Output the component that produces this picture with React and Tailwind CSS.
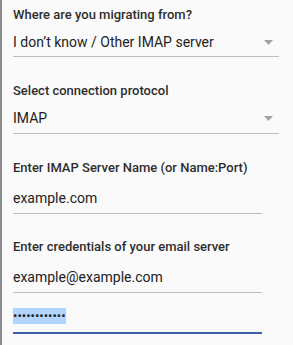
import React from "react";

function Arrow() {
  return (
    <svg width="9" height="5" viewBox="0 0 9 5" className="mr-[6px]">
      <path d="M0 0 L9 0 L4.5 5 Z" fill="#a3a3a3" />
    </svg>
  );
}

function Label({ children, className = "" }) {
  return (
    <div className={`h-[16px] text-[13px] leading-[16px] font-medium text-[#2e2e2e] ${className}`}>
      {children}
    </div>
  );
}

export default function App() {
  return (
    <div
      className="w-[293px] h-[345px] overflow-hidden bg-[#fafafa] border-l-2 border-[#8c8c8c] text-[#222]"
      style={{ fontFamily: "Roboto, 'Noto Sans', sans-serif" }}
    >
      <div className="pl-[11px] pt-[7px]">
        {/* Source */}
        <Label>Where are you migrating from?</Label>
        <div className="mt-[9px] w-[266px] h-[25px] border-b border-[#bdbdbd] flex items-start justify-between">
          <span className="text-[14px] leading-[20px]">I don’t know / Other IMAP server</span>
          <div className="h-[20px] flex items-center"><Arrow /></div>
        </div>

        {/* Protocol */}
        <Label className="mt-[26px]">Select connection protocol</Label>
        <div className="mt-[9px] w-[266px] h-[26px] border-b border-[#bdbdbd] flex items-start justify-between">
          <span className="text-[14px] leading-[20px]">IMAP</span>
          <div className="h-[20px] flex items-center"><Arrow /></div>
        </div>

        {/* Server */}
        <Label className="mt-[26px]">Enter IMAP Server Name (or Name:Port)</Label>
        <div className="mt-[10px] w-[249px] h-[28px] border-b border-[#bdbdbd]">
          <span className="text-[14px] leading-[20px]">example.com</span>
        </div>

        {/* Credentials */}
        <Label className="mt-[25px]">Enter credentials of your email server</Label>
        <div className="mt-[10px] w-[249px] h-[28px] border-b border-[#bdbdbd]">
          <span className="text-[14px] leading-[20px]">example@example.com</span>
        </div>
        <div className="mt-[13px] w-[249px] h-[28px] border-b-2 border-[#3d5ea8]">
          <div className="h-[20px] flex items-center">
            <span className="bg-[#b3d4fc] h-[16px] leading-[16px] text-[13px] text-[#222]">
              ••••••••••••
            </span>
          </div>
        </div>
      </div>
    </div>
  );
}
